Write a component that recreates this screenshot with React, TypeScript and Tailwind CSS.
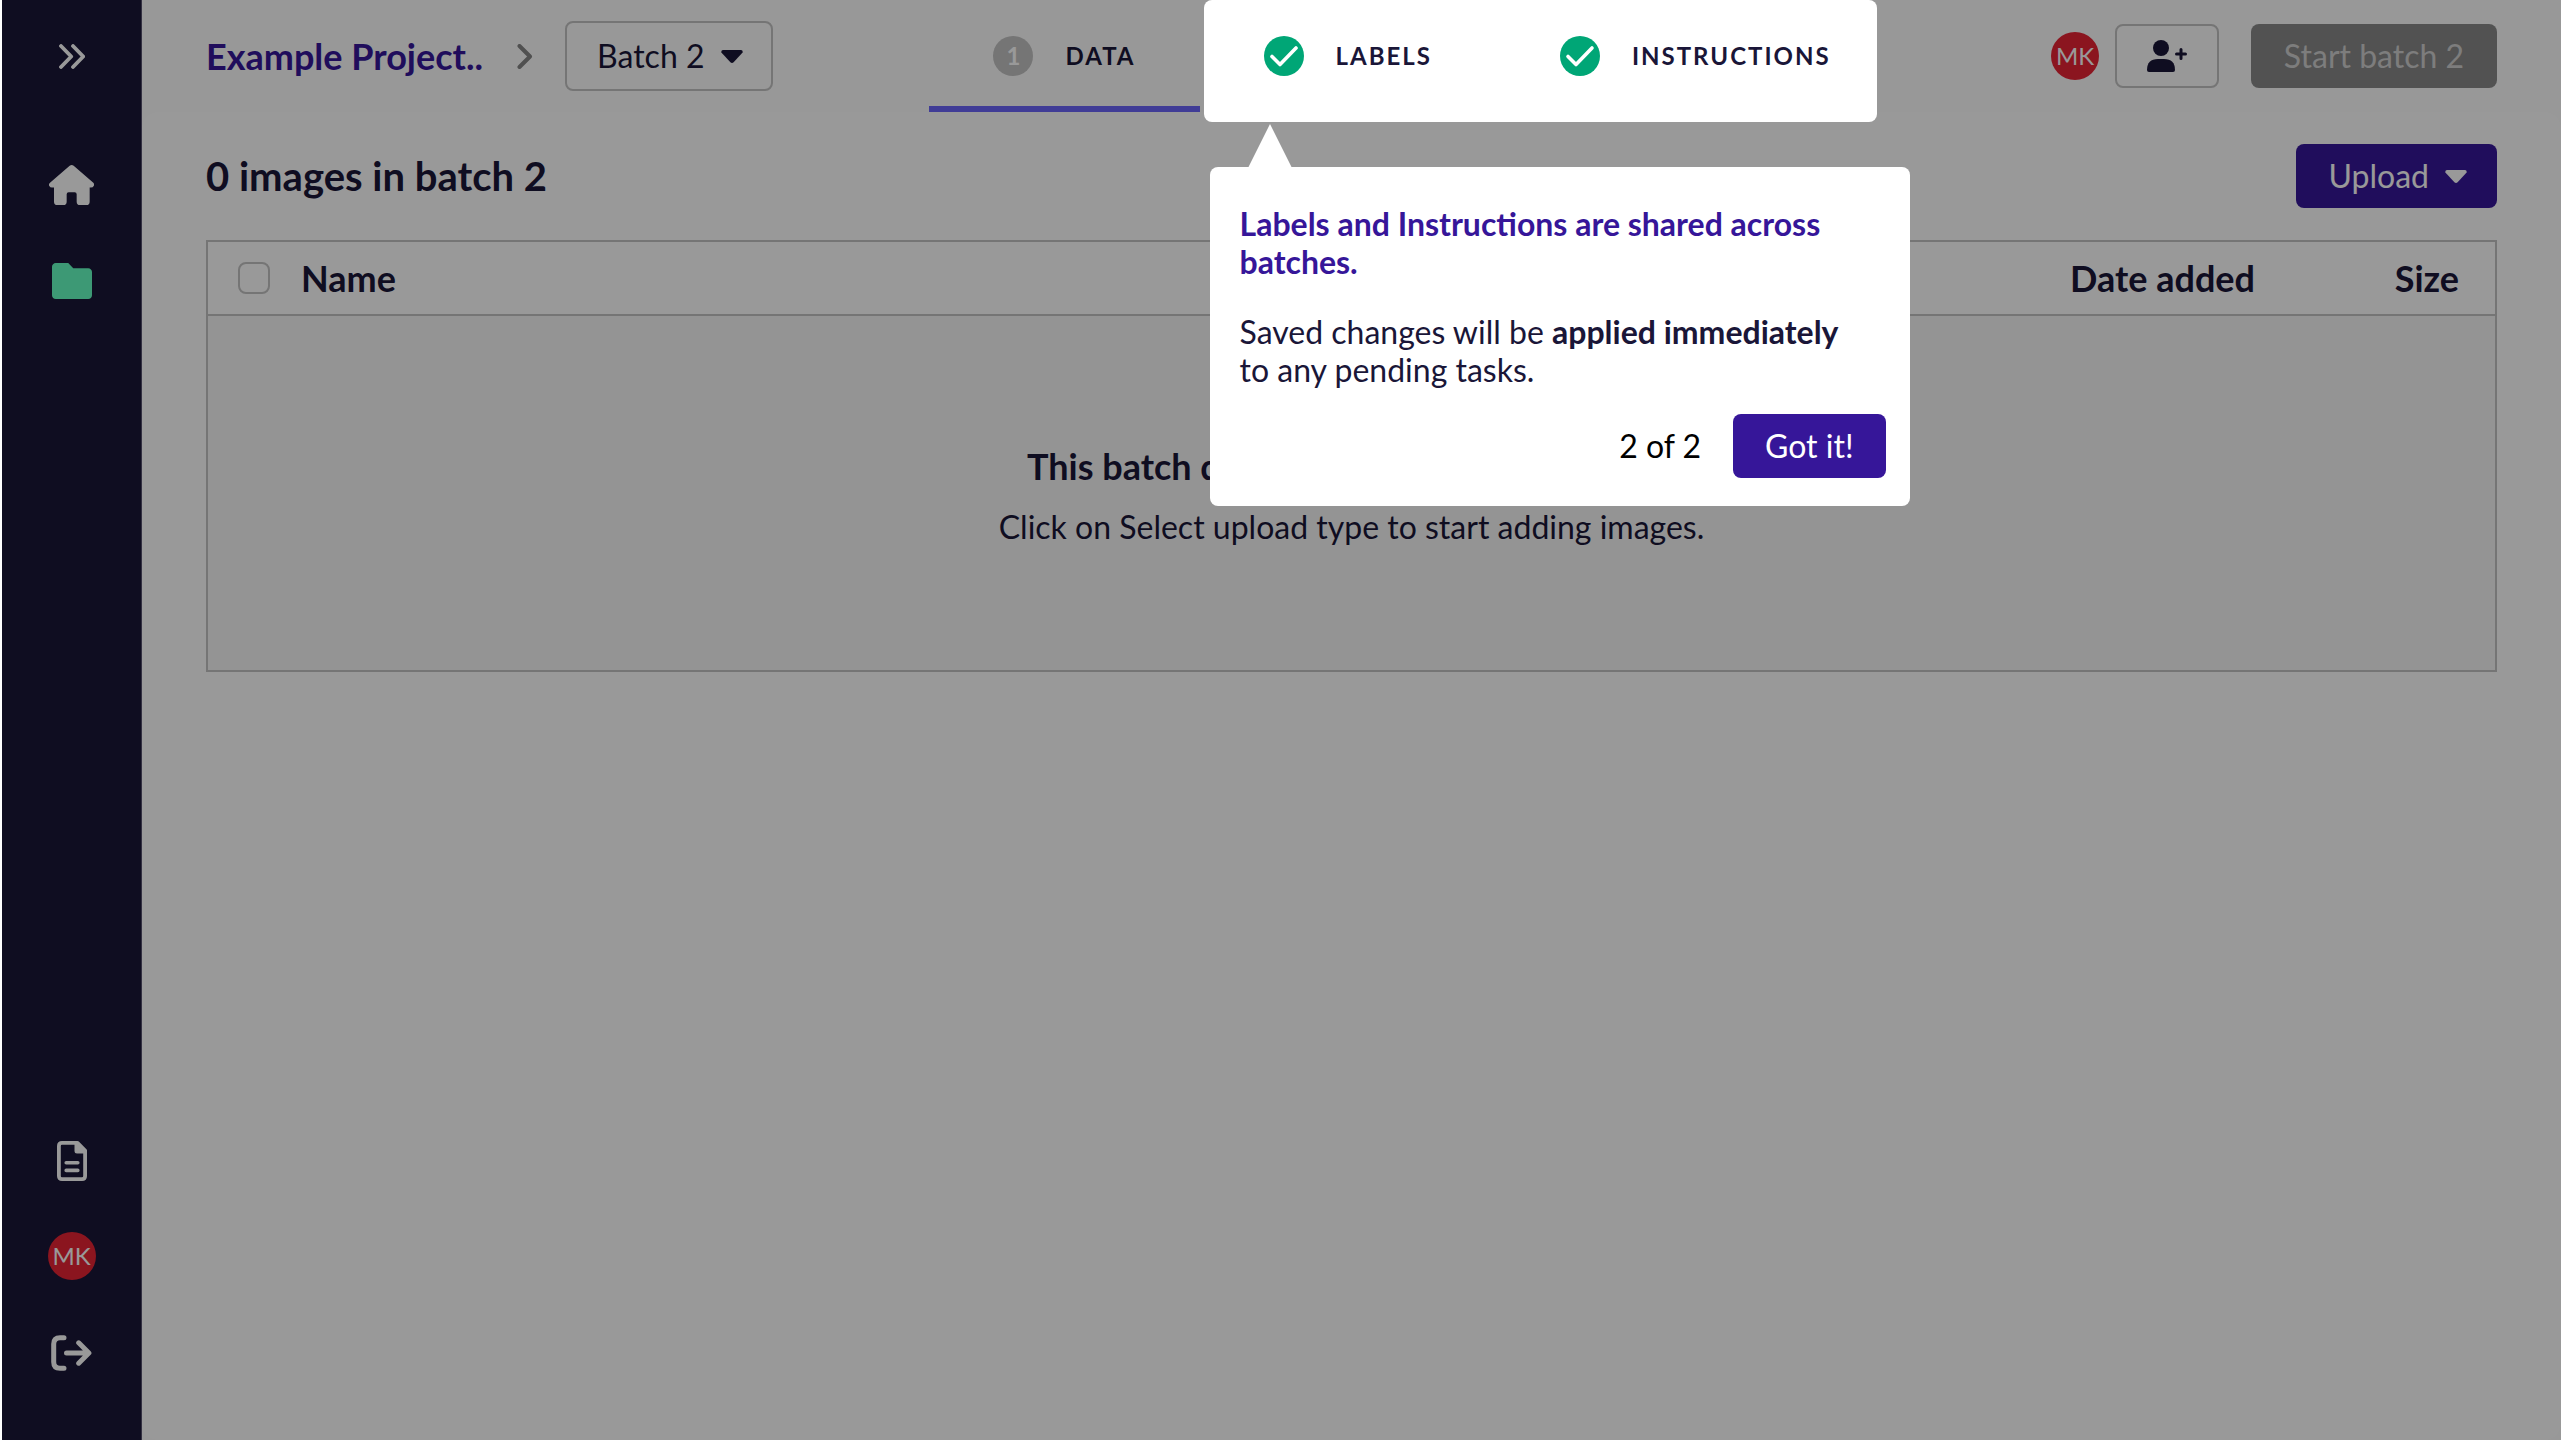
import { useState, type ReactNode } from 'react';

function Avatar({ initials }: { initials: string }) {
  return (
    <span className="flex size-12 items-center justify-center rounded-full bg-[#e82335] text-2xl text-white">
      {initials}
    </span>
  );
}

function Caret() {
  return (
    <svg viewBox="0 0 22 13" className="h-[13px] w-[22px]" fill="currentColor" aria-hidden="true">
      <path d="M2 0H20Q22 .3 21.6 2.200L20.700 3.600L12.600 12.200Q11 13.600 9.400 12.200L1.300 3.600L.4 2.200Q0 .3 2 0Z" />
    </svg>
  );
}

function HouseIcon() {
  return (
    <svg viewBox="147 495 135 120" className="h-10 w-[45px]" fill="currentColor" aria-hidden="true">
      <path d="M209 497Q215 493 221 497L280 548Q284 553 281 558Q279 562.500 273 562.500H269V605Q269 615 259 615H240Q230 615 230 605V583Q230 577 224 577H206Q200 577 200 583V605Q200 615 190 615H172Q162 615 162 605V562.500H156Q150 562.500 148 558Q145 553 150 548Z" />
    </svg>
  );
}

function FolderIcon() {
  return (
    <svg viewBox="0 32 512 448" className="h-9 w-10" preserveAspectRatio="none" fill="currentColor" aria-hidden="true">
      <path d="M512 144v288c0 26.500-21.500 48-48 48H48c-26.500 0-48-21.500-48-48V80c0-26.500 21.500-48 48-48h160l64 64h192c26.500 0 48 21.500 48 48z" />
    </svg>
  );
}

function DocumentIcon() {
  return (
    <svg viewBox="0 0 30 40" className="h-10 w-[30px]" fill="none" stroke="currentColor" aria-hidden="true">
      <path strokeWidth="3.800" strokeLinejoin="round" d="M5 1.900H20.500L28.100 9.500V35Q28.100 38.100 25 38.100H5Q1.900 38.100 1.900 35V5Q1.900 1.900 5 1.900Z" />
      <path stroke="none" fill="currentColor" d="M17.500 1H21L29.500 9.500V12.500H20Q17.500 12.500 17.500 10Z" />
      <path strokeWidth="3.600" strokeLinecap="round" d="M9.200 21.800H20.800M9.200 29.400H20.800" />
    </svg>
  );
}

function LogoutIcon() {
  return (
    <svg viewBox="0 0 41 36" className="h-9 w-[41px]" fill="none" stroke="currentColor" strokeWidth="5" strokeLinecap="round" strokeLinejoin="round" aria-hidden="true">
      <path d="M13 2.700H9Q2.700 2.700 2.700 9V27Q2.700 33.300 9 33.300H13" />
      <path d="M15.500 18H37M27.700 7.800L37.900 18L27.700 28.200" />
    </svg>
  );
}

function DoubleChevronIcon() {
  return (
    <svg viewBox="0 0 26 25" className="h-[25px] w-[26px]" fill="none" stroke="currentColor" strokeWidth="3.800" strokeLinecap="round" strokeLinejoin="round" aria-hidden="true">
      <path d="M2 2L12.200 12.500L2 23M14 2L24.200 12.500L14 23" />
    </svg>
  );
}

function UserPlusIcon() {
  return (
    <svg viewBox="0 0 40 32" className="h-8 w-10" fill="currentColor" aria-hidden="true">
      <circle cx="14" cy="8" r="8" />
      <path d="M11 19H17Q28 19 28 30Q28 32 26 32H2Q0 32 0 30Q0 19 11 19Z" />
      <path d="M34 9.500V18.500M29.500 14H38.500" fill="none" stroke="currentColor" strokeWidth="3" strokeLinecap="round" />
    </svg>
  );
}

function CheckBadge() {
  return (
    <svg viewBox="0 0 40 40" className="size-10" aria-hidden="true">
      <circle cx="20" cy="20" r="20" fill="#00a676" />
      <path d="M8 20.500L16 28.500L32 12" fill="none" stroke="white" strokeWidth="3.600" strokeLinecap="round" strokeLinejoin="round" />
    </svg>
  );
}

function Step({ badge, label, active = false }: { badge: ReactNode; label: string; active?: boolean }) {
  return (
    <a
      href="#"
      className={`relative flex h-28 items-center gap-8 border-b-[6px] px-16 pt-[6px] text-2xl font-bold tracking-[2px] ${
        active ? 'border-[#6c64fb]' : 'border-transparent'
      }`}
    >
      {badge}
      {label}
    </a>
  );
}

function Sidebar() {
  return (
    <aside className="flex w-[140px] flex-col items-center justify-between border-r border-[#58536f] bg-[#191637] text-white">
      <div className="flex flex-col items-center pt-11">
        <button type="button" aria-label="Expand menu">
          <DoubleChevronIcon />
        </button>
        <a href="#" aria-label="Home" className="mt-24">
          <HouseIcon />
        </a>
        <a href="#" aria-label="Projects" className="mt-[58px] text-[#66ffc3]">
          <FolderIcon />
        </a>
      </div>
      <div className="flex flex-col items-center pb-[69px]">
        <a href="#" aria-label="Documentation">
          <DocumentIcon />
        </a>
        <div className="mt-[51px]">
          <Avatar initials="MK" />
        </div>
        <button type="button" aria-label="Log out" className="mt-[55px]">
          <LogoutIcon />
        </button>
      </div>
    </aside>
  );
}

function TourPopup({ onClose }: { onClose: () => void }) {
  return (
    <div role="dialog" aria-label="Tour" className="absolute top-[167px] left-[10px] w-[700px] rounded-lg bg-white pt-[38px] pr-6 pb-7 pl-[30px] text-[32px] leading-[38px]">
      <svg viewBox="0 0 44 44" className="absolute -top-[43px] left-[38px] size-11" fill="white" aria-hidden="true">
        <path d="M22 0L44 44H0Z" />
      </svg>
      <h2 className="pr-10 font-bold text-[#361699]">Labels and Instructions are shared across batches.</h2>
      <p className="mt-8 pr-10">
        Saved changes will be <strong className="font-bold">applied immediately</strong> to any pending tasks.
      </p>
      <div className="mt-[25px] flex items-center justify-end gap-8 text-black">
        <span>2 of 2</span>
        <button type="button" onClick={onClose} className="h-16 rounded-lg bg-[#361699] px-8 text-white">
          Got it!
        </button>
      </div>
    </div>
  );
}

function ImageTable() {
  return (
    <div className="mt-8 border-2 border-[#c3c3c3]">
      <table className="w-full border-separate border-spacing-0">
        <thead>
          <tr className="text-4xl">
            <th className="h-[74px] w-[93px] border-b-2 border-[#c3c3c3] pl-[30px] text-left">
              <input
                type="checkbox"
                aria-label="Select all images"
                className="block size-8 appearance-none rounded-lg border-2 border-[#c3c3c3]"
              />
            </th>
            <th className="border-b-2 border-[#c3c3c3] text-left font-bold">Name</th>
            <th className="border-b-2 border-[#c3c3c3] text-right font-bold">Date added</th>
            <th className="w-[240px] border-b-2 border-[#c3c3c3] pr-9 text-right font-bold">Size</th>
          </tr>
        </thead>
        <tbody>
          <tr>
            <td colSpan={4} className="h-[354px] bg-[#f7f7f7] pt-32 text-center align-top">
              <p className="text-4xl leading-[44px] font-bold">This batch does not have any images yet.</p>
              <p className="mt-5 text-[32px] leading-[38px]">Click on Select upload type to start adding images.</p>
            </td>
          </tr>
        </tbody>
      </table>
    </div>
  );
}

export default function App() {
  const [showTour, setShowTour] = useState(true);

  return (
    <div className="min-h-screen bg-white pl-[2px] font-['Lato',sans-serif] text-[#1a1638]">
      <div className="relative isolate flex min-h-screen">
        <Sidebar />
        <div className="flex min-w-0 flex-1 flex-col bg-[#fdfdfd]">
          <header className="flex h-28 items-center justify-between px-16">
            <div className="flex items-center">
              <a href="#" className="text-4xl font-bold text-[#361699]">
                Example Project..
              </a>
              <svg viewBox="0 0 16 25" className="mr-8 ml-[34px] h-[25px] w-4" fill="none" stroke="#858585" strokeWidth="4" strokeLinecap="round" strokeLinejoin="round" aria-hidden="true">
                <path d="M2.500 2L13 12.500L2.500 23" />
              </svg>
              <label className="relative flex items-center">
                <select
                  aria-label="Batch"
                  defaultValue="2"
                  className="h-[70px] w-[208px] appearance-none rounded-lg border-2 border-[#c3c3c3] pl-[30px] text-[32px]"
                >
                  <option value="2">Batch 2</option>
                </select>
                <span className="pointer-events-none absolute right-[30px]">
                  <Caret />
                </span>
              </label>
            </div>

            <nav className="flex">
              <Step
                active
                label="DATA"
                badge={
                  <span className="flex size-10 items-center justify-center rounded-full bg-[#c3c3c3] tracking-normal text-white">
                    1
                  </span>
                }
              />
              <div className={showTour ? 'relative z-20 flex' : 'relative flex'}>
                {showTour && <div className="absolute top-0 right-[18px] left-1 h-[122px] rounded-lg bg-white" />}
                <Step label="LABELS" badge={<CheckBadge />} />
                <Step label="INSTRUCTIONS" badge={<CheckBadge />} />
                {showTour && <TourPopup onClose={() => setShowTour(false)} />}
              </div>
            </nav>

            <div className="flex items-center">
              <Avatar initials="MK" />
              <button
                type="button"
                aria-label="Invite user"
                className="ml-4 flex h-16 w-[104px] items-center justify-center rounded-lg border-2 border-[#c3c3c3]"
              >
                <UserPlusIcon />
              </button>
              <button type="button" disabled className="ml-8 h-16 min-w-[246px] rounded-lg bg-[#898989] px-8 text-[32px] text-[#d0d0d0]">
                Start batch 2
              </button>
            </div>
          </header>

          <main className="flex-1 rounded-2xl bg-white px-16 pt-8">
            <div className="flex items-center justify-between">
              <h1 className="text-[40px] leading-[48px] font-bold">0 images in batch 2</h1>
              <button
                type="button"
                aria-haspopup="menu"
                className="flex h-16 items-center gap-4 rounded-lg bg-[#361699] pr-[30px] pl-8 text-[32px] text-white"
              >
                Upload
                <Caret />
              </button>
            </div>
            <ImageTable />
          </main>
        </div>
        {showTour && <div className="absolute inset-0 z-10 bg-black/40" />}
      </div>
    </div>
  );
}
